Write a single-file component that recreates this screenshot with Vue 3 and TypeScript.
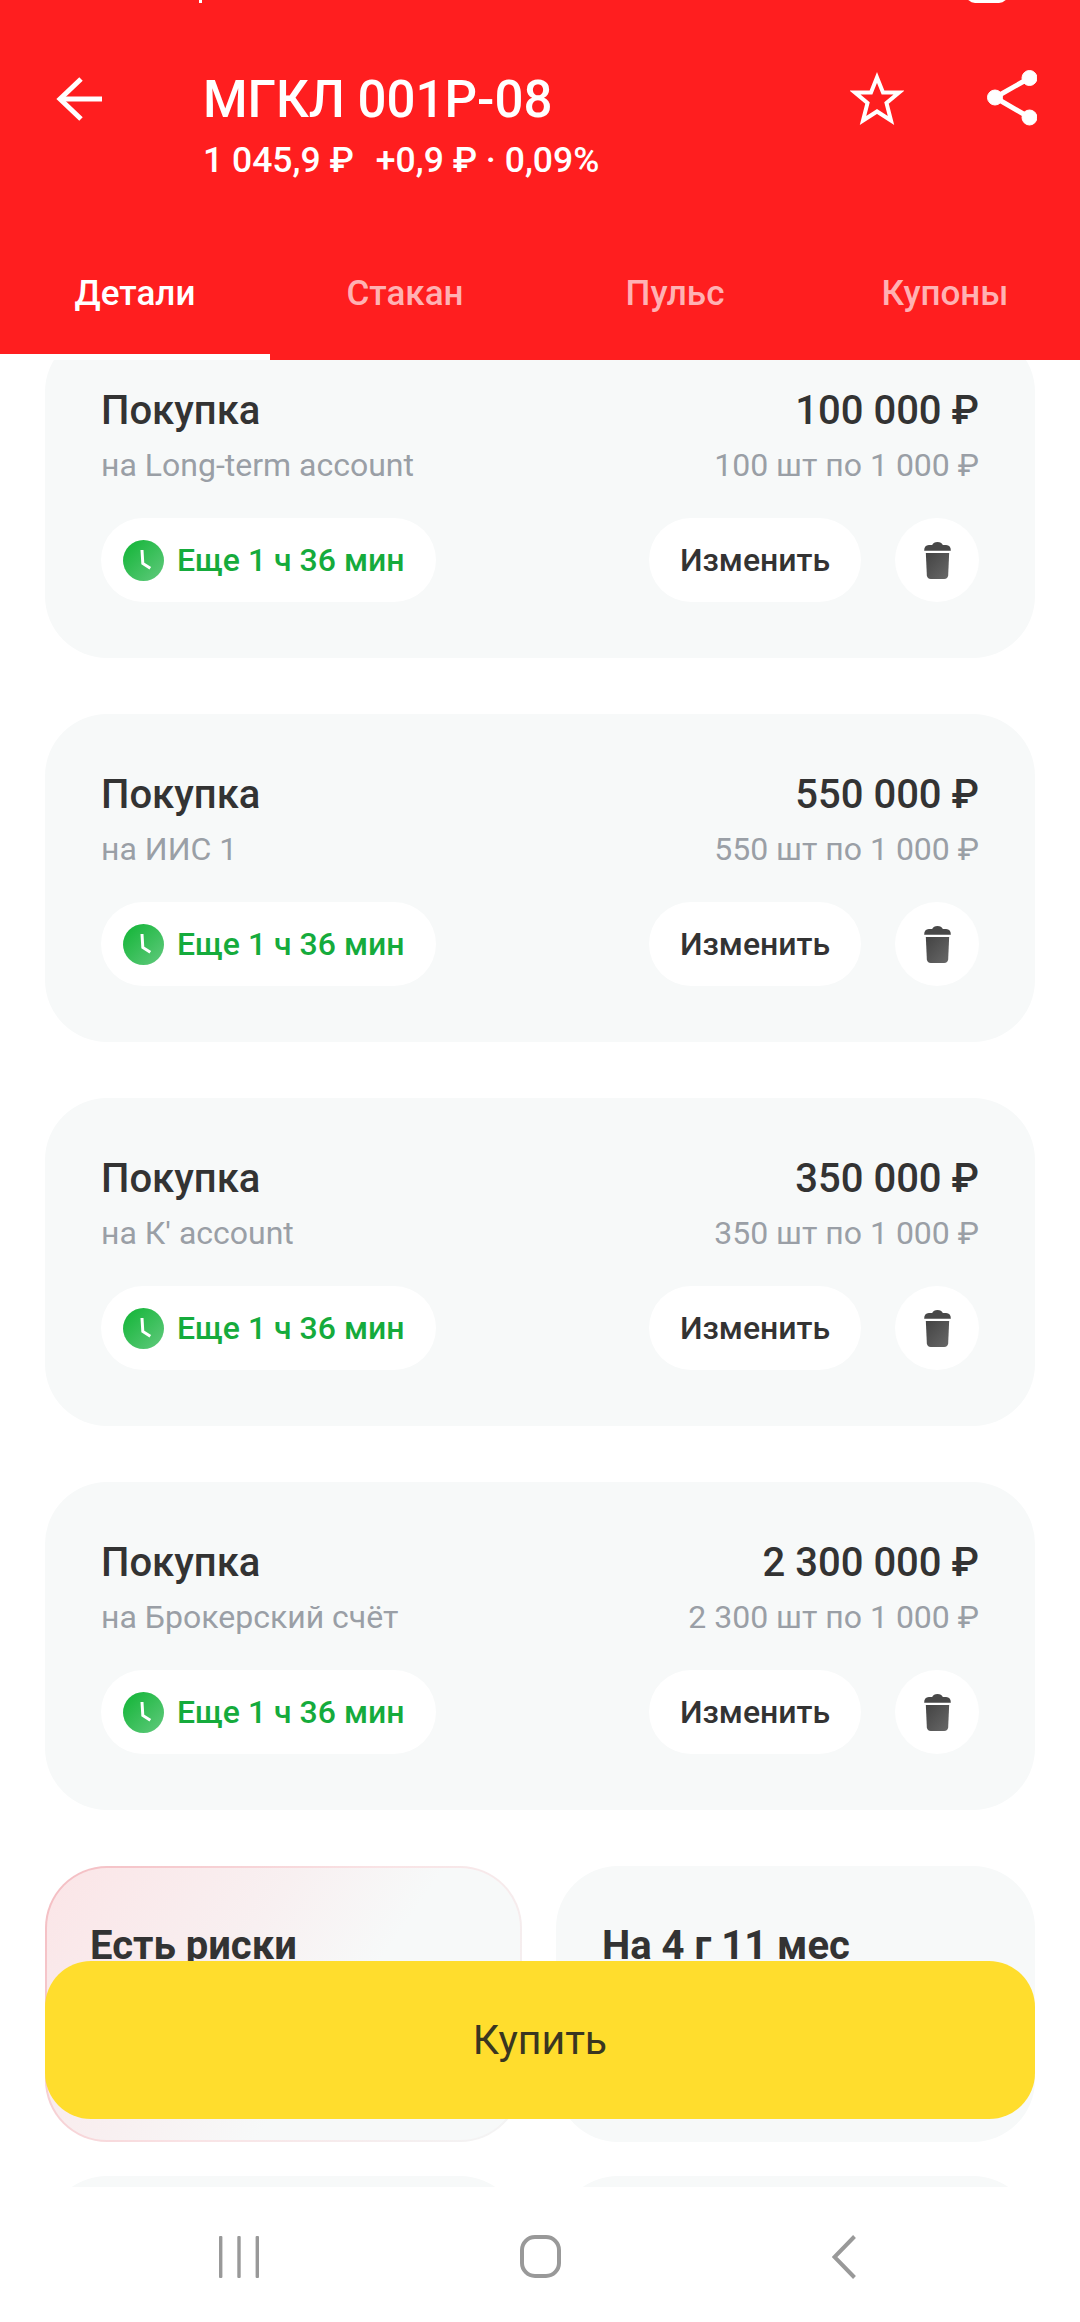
<script setup lang="ts">
interface Order {
  account: string
  amount: string
  detail: string
}

const tabs: string[] = ['Детали', 'Стакан', 'Пульс', 'Купоны']

const orders: Order[] = [
  { account: 'на Long-term account', amount: '100 000 ₽', detail: '100 шт по 1 000 ₽' },
  { account: 'на ИИС 1', amount: '550 000 ₽', detail: '550 шт по 1 000 ₽' },
  { account: "на К' account", amount: '350 000 ₽', detail: '350 шт по 1 000 ₽' },
  { account: 'на Брокерский счёт', amount: '2 300 000 ₽', detail: '2 300 шт по 1 000 ₽' },
]
</script>

<template>
  <div class="page">
    <header class="header">
      <span class="status-dot"></span>
      <span class="status-arc"></span>
      <div class="toolbar">
        <svg class="back" viewBox="0 0 46 46" fill="none" stroke="#fff" stroke-width="5">
          <path d="M46 23H5" />
          <path d="M25 3L4 23l21 20" />
        </svg>
        <div class="heading">
          <div class="title">МГКЛ 001Р-08</div>
          <div class="price"><span>1 045,9 ₽</span><span class="change">+0,9 ₽ · 0,09%</span></div>
        </div>
        <svg class="star" viewBox="0 0 54 54" fill="none" stroke="#fff" stroke-width="4">
          <polygon points="27,5.5 33,20.5 49,20.5 36.5,31 41,48.5 27,39.5 13,48.5 17.5,31 5,20.5 21,20.5" />
        </svg>
        <svg class="share" viewBox="0 0 50 57" fill="#fff" stroke="#fff">
          <path d="M42.5 9L8 28.5 42.5 48.5" fill="none" stroke-width="5" />
          <circle cx="42.5" cy="9" r="7.5" stroke-width="1" />
          <circle cx="8" cy="28.5" r="7.5" stroke-width="1" />
          <circle cx="42.5" cy="48.5" r="7.5" stroke-width="1" />
        </svg>
      </div>
      <nav class="tabs">
        <div v-for="(tab, i) in tabs" :key="tab" class="tab" :class="{ active: i === 0 }">{{ tab }}</div>
      </nav>
      <span class="indicator"></span>
    </header>

    <main class="content">
      <section v-for="order in orders" :key="order.account" class="card">
        <div class="row">
          <div class="card-title">Покупка</div>
          <div class="card-title">{{ order.amount }}</div>
        </div>
        <div class="row sub">
          <div>{{ order.account }}</div>
          <div>{{ order.detail }}</div>
        </div>
        <div class="row actions">
          <div class="pill timer">
            <svg class="clock" viewBox="0 0 41 41">
              <defs>
                <linearGradient id="clockFill" x1="0" y1="0" x2="1" y2="1">
                  <stop offset="0" stop-color="#0fb434" />
                  <stop offset="1" stop-color="#62ca7e" />
                </linearGradient>
              </defs>
              <circle cx="20.5" cy="20.5" r="20.5" fill="url(#clockFill)" />
              <path d="M19 10l.8 13.5 7.5 4.8" fill="none" stroke="#fff" stroke-width="3" />
            </svg>
            <span>Еще 1 ч 36 мин</span>
          </div>
          <div class="buttons">
            <div class="pill edit">Изменить</div>
            <div class="pill trash">
              <svg class="trash-icon" viewBox="0 0 80 111">
                <defs>
                  <linearGradient id="trashFill" x1="0" y1="0" x2="1" y2="1">
                    <stop offset="0" stop-color="#434343" />
                    <stop offset="1" stop-color="#686868" />
                  </linearGradient>
                </defs>
                <path d="M0 26Q0 10 14 9H24Q28 0 40 0T56 9H66Q80 10 80 26Z" fill="#484848" />
                <path d="M5 33H75L72 100Q71 111 60 111H20Q9 111 8 100Z" fill="url(#trashFill)" />
              </svg>
            </div>
          </div>
        </div>
      </section>

      <div class="tiles">
        <div class="tile risk"><div class="tile-title">Есть риски</div></div>
        <div class="tile"><div class="tile-title">На 4 г 11 мес</div></div>
        <div class="tile"></div>
        <div class="tile"></div>
      </div>
    </main>

    <button class="buy">Купить</button>

    <footer class="nav">
      <svg class="nav-bars" viewBox="0 0 40 42" fill="#999">
        <rect x="0" y="0" width="3.4" height="42" rx="1" />
        <rect x="18.3" y="0" width="3.4" height="42" rx="1" />
        <rect x="36.6" y="0" width="3.4" height="42" rx="1" />
      </svg>
      <svg class="nav-home" viewBox="0 0 41 43" fill="none" stroke="#999" stroke-width="4">
        <rect x="2" y="2" width="37" height="39" rx="13" />
      </svg>
      <svg class="nav-back" viewBox="0 0 24 44" fill="none" stroke="#999" stroke-width="4">
        <path d="M22.5 1.5L2.5 22l20 20.5" />
      </svg>
    </footer>
  </div>
</template>

<style>
html,
body {
  margin: 0;
  background: #fff;
}
</style>

<style scoped>
.page {
  position: relative;
  width: 1080px;
  height: 2322px;
  display: flex;
  flex-direction: column;
  overflow: hidden;
  background: #fff;
  font-family: Roboto, "Noto Sans", sans-serif;
  color: #333;
}

.header {
  position: relative;
  z-index: 2;
  flex: none;
  height: 360px;
  background: #ff1e1f;
  color: #fff;
}

.status-dot {
  position: absolute;
  top: 0;
  left: 199px;
  width: 3px;
  height: 3px;
  background: #fff;
}

.status-arc {
  position: absolute;
  top: -6px;
  left: 966px;
  width: 42px;
  height: 9px;
  border-radius: 0 0 10px 10px;
  background: #fff;
}

.toolbar {
  display: flex;
  align-items: flex-start;
  padding: 70px 43px 0 56px;
}

.back {
  flex: none;
  width: 46px;
  height: 46px;
  margin-top: 6px;
}

.heading {
  margin-left: 101px;
  flex: 1;
}

.title {
  margin-top: 2px;
  font-size: 51px;
  line-height: 56px;
  font-weight: 500;
}

.price {
  margin-top: 10px;
  font-size: 35.5px;
  line-height: 44px;
  font-weight: 500;
}

.change {
  margin-left: 22px;
}

.star {
  flex: none;
  width: 54px;
  height: 54px;
  margin: 2px 83px 0 0;
}

.share {
  flex: none;
  width: 50px;
  height: 57px;
  margin-top: -1px;
}

.tabs {
  display: grid;
  grid-template-columns: repeat(4, 270px);
  margin-top: 68px;
}

.tab {
  text-align: center;
  font-size: 35px;
  line-height: 88px;
  font-weight: 500;
  color: #ffb1b3;
}

.tab.active {
  color: #fff;
}

.indicator {
  position: absolute;
  left: 0;
  bottom: 0;
  width: 270px;
  height: 6px;
  background: #fff;
}

.content {
  flex: 1;
  min-height: 0;
  margin-top: -30px;
  padding: 0 45px;
  display: flex;
  flex-direction: column;
  gap: 56px;
  overflow: hidden;
}

.card {
  flex: none;
  box-sizing: border-box;
  height: 328px;
  padding: 57px 56px 56px;
  border-radius: 62px;
  background: #f7f9f9;
}

.row {
  display: flex;
  justify-content: space-between;
  align-items: center;
}

.card-title {
  font-size: 40px;
  line-height: 48px;
  font-weight: 500;
}

.sub {
  margin-top: 8px;
  font-size: 32px;
  line-height: 44px;
  color: #9a9fa6;
}

.actions {
  margin-top: 31px;
}

.buttons {
  display: flex;
  gap: 34px;
}

.pill {
  box-sizing: border-box;
  display: flex;
  align-items: center;
  height: 84px;
  border-radius: 42px;
  background: #fff;
  font-size: 32px;
  font-weight: 500;
}

.timer {
  width: 335px;
  padding-left: 22px;
  color: #15ab3c;
}

.clock {
  flex: none;
  width: 41px;
  height: 41px;
  margin-right: 13px;
}

.edit {
  width: 212px;
  justify-content: center;
}

.trash {
  width: 84px;
  justify-content: center;
}

.trash-icon {
  width: 27px;
  height: 37px;
}

.tiles {
  flex: none;
  display: grid;
  grid-template-columns: 477px 479px;
  column-gap: 34px;
  row-gap: 34px;
}

.tile {
  box-sizing: border-box;
  height: 276px;
  padding: 56px 46px 0;
  border-radius: 62px;
  background: #f7f9f9;
}

.risk {
  border: 2px solid transparent;
  padding: 54px 43px 0;
  background:
    linear-gradient(125deg, #fbe5e7 0%, #f8f0f1 38%, #f7f9f9 60%) padding-box,
    linear-gradient(125deg, #f4bcc1 0%, #f9e3e5 50%, #f3f5f5 100%) border-box;
}

.tile-title {
  font-size: 40px;
  line-height: 48px;
  font-weight: 700;
}

.buy {
  position: absolute;
  z-index: 3;
  left: 45px;
  top: 1961px;
  width: 990px;
  height: 158px;
  border: 0;
  border-radius: 46px;
  background: #ffdd2d;
  color: #3a3620;
  font-family: inherit;
  font-size: 41px;
  font-weight: 400;
}

.nav {
  flex: none;
  position: relative;
  z-index: 2;
  box-sizing: border-box;
  height: 135px;
  padding: 48px 0 0 219px;
  display: flex;
  align-items: flex-start;
  background: #fff;
}

.nav-bars {
  width: 40px;
  height: 42px;
  margin-top: 1px;
}

.nav-home {
  width: 41px;
  height: 43px;
  margin-left: 261px;
}

.nav-back {
  width: 24px;
  height: 44px;
  margin-left: 271px;
}
</style>
